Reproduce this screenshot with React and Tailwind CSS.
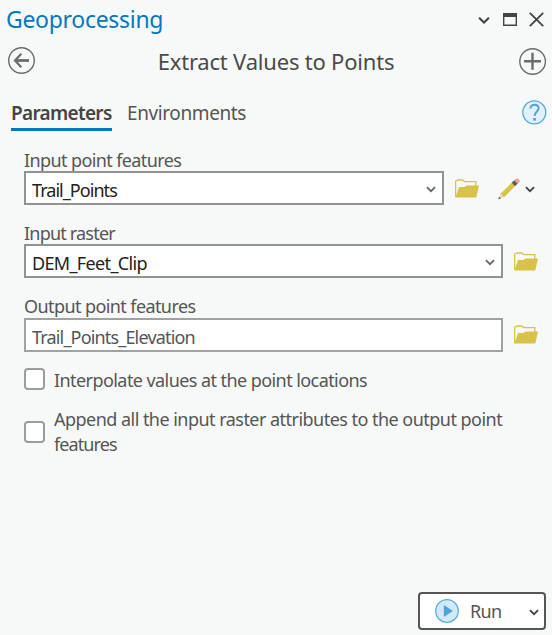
import React from "react";

function Chevron({ className }) {
  return (
    <svg viewBox="0 0 10 7" className={className} fill="none" stroke="currentColor" strokeWidth="1.8">
      <path d="M.9 1.2 5 5.2 9.1 1.2" />
    </svg>
  );
}

function Folder() {
  return (
    <svg viewBox="0 0 24 19" className="h-[19px] w-6 shrink-0">
      <path d="M.6 18V2.2L3.2 1h4.6l1.8 1.6h11.2v5" fill="none" stroke="#d9c24a" strokeWidth="1.3" />
      <path d="M.4 18.4 4 8.1h5.4l2-1.6H24l-2.7 11.9z" fill="#d9c24a" />
    </svg>
  );
}

function Pencil() {
  return (
    <svg viewBox="0 0 22 22" className="h-[22px] w-[22px] shrink-0">
      <path d="M.4 21.2 2.5 15.8 6 19.2z" fill="#f4d6b4" />
      <path d="M.3 21.3 1.2 18.7 3 20.4z" fill="#555" />
      <path d="M2.5 15.8 13.6 4.8 17 8.2 6 19.2z" fill="#d9c24a" />
      <path d="M13.6 4.8 16.4 2.2 19.8 5.5 17 8.2z" fill="#5c5c60" />
      <path d="M16.4 2.2 17.6 1q1.6-1.2 3.2.3t.3 3L19.8 5.5z" fill="#e5a49a" />
    </svg>
  );
}

function Field({ label, labelClass, value, valueClass, select, wide, children }) {
  return (
    <div className="h-[73px] pl-6">
      <div className={"h-[24px] " + (select ? "leading-[26px]" : "leading-[24px]")}>
        <span className={"text-[18px] " + labelClass}>{label}</span>
      </div>
      <div className="flex items-center">
        <div
          className={
            "flex h-[34px] items-center justify-between border-2 bg-white pl-[6px] pr-[6px] " +
            (select ? "border-[#919393] text-[#222] " : "border-[#a0a2a2] ") +
            (wide ? "w-[479px]" : "w-[420px]")
          }
        >
          <span className={"pt-[3px] text-[18px] leading-[24px] " + valueClass}>{value}</span>
          {select && <Chevron className="mt-[2px] h-[7px] w-[10px] text-[#666]" />}
        </div>
        <div className={"flex items-center pl-[11px] " + (select ? "pt-px" : "pb-px")}>{children}</div>
      </div>
    </div>
  );
}

function Box() {
  return <span className="h-[22px] w-[21px] shrink-0 rounded-[4px] border-2 border-[#9b9d9d] bg-white" />;
}

export default function App() {
  return (
    <div className="flex h-[635px] w-[552px] flex-col overflow-hidden whitespace-nowrap bg-[#f7f9f8] font-['Noto_Sans','Open_Sans',sans-serif] text-[#555]">
      <header className="flex h-[38px] items-center justify-between pl-[6px] pr-[8px]">
        <h1 className="text-[23px] leading-[38px] tracking-[-0.3px] text-[#0079c1]">Geoprocessing</h1>
        <div className="flex h-[32px] items-center text-[#444]">
          <Chevron className="mt-[3px] h-[9px] w-[12px]" />
          <svg viewBox="0 0 14 13" className="ml-[13px] h-[13px] w-[14px]">
            <path d="M.7.7h12.6v11.6H.7z" fill="none" stroke="currentColor" strokeWidth="1.4" />
            <path d="M0 0h14v4H0z" fill="currentColor" />
          </svg>
          <svg viewBox="0 0 15 15" className="ml-[12px] h-[15px] w-[15px]" stroke="currentColor" strokeWidth="1.8">
            <path d="M.8.8l13.4 13.4M14.2.8.8 14.2" />
          </svg>
        </div>
      </header>

      <div className="flex h-[46px] items-center justify-between pl-[8px] pr-[5px]">
        <svg viewBox="0 0 28 28" className="h-7 w-7" fill="none" stroke="#6b6b6b">
          <circle cx="13.5" cy="13.5" r="12.8" strokeWidth="1.4" />
          <path d="M21 13.5H7.5" strokeWidth="2.8" />
          <path d="M13.3 6.7 7 13.5l6.3 6.8" strokeWidth="2.2" />
        </svg>
        <h2 className="-mt-px pr-[3px] text-[22px] leading-[30px] tracking-[-0.2px] text-[#4a4a4a]">Extract Values to Points</h2>
        <svg viewBox="0 0 28 28" className="h-7 w-7" fill="none" stroke="#6b6b6b">
          <circle cx="13.6" cy="14.5" r="12.8" strokeWidth="1.4" />
          <path d="M5 14.3h17M13.5 5.8v17" strokeWidth="2.4" />
        </svg>
      </div>

      <nav className="flex h-[64px] items-start pl-[11px] pr-[5px] pt-[15px]">
        <div className="h-[32px] w-[101px] border-b-[3px] border-[#0079c1] font-semibold text-[#444]">
          <span className="text-[19px] leading-[29px] tracking-[-0.7px]">Parameters</span>
        </div>
        <span className="ml-[15px] text-[19px] leading-[29px] tracking-[-0.4px]">Environments</span>
        <svg viewBox="0 0 25 25" className="ml-auto mt-px h-[25px] w-[25px]">
          <circle cx="12.3" cy="12.3" r="11.5" fill="#e2f1fc" stroke="#5aa9dd" strokeWidth="1.3" />
          <path d="M8.4 8.5c.3-2.6 1.9-3.7 4.1-3.7 2.4 0 4.1 1.4 4.1 3.5 0 3.3-4.1 3.6-4.1 7.7" fill="none" stroke="#4fa3db" strokeWidth="2" />
          <path d="M11.2 18h2.7v2.6h-2.7z" fill="#4fa3db" />
        </svg>
      </nav>

      <main className="-mt-px flex flex-col">
        <Field label="Input point features" labelClass="tracking-[-0.61px]" value="Trail_Points" valueClass="tracking-[-0.95px]" select>
          <Folder />
          <span className="w-[19px]" />
          <Pencil />
          <Chevron className="ml-[5px] mt-px h-[7px] w-[10px] text-[#444]" />
        </Field>
        <Field label="Input raster" labelClass="tracking-[-0.8px]" value="DEM_Feet_Clip" valueClass="tracking-[-0.65px]" select wide>
          <Folder />
        </Field>
        <div className="pt-px">
          <Field label="Output point features" labelClass="tracking-[-0.59px]" value="Trail_Points_Elevation" valueClass="tracking-[-0.83px]" wide>
            <Folder />
          </Field>
        </div>
        <label className="mt-px flex h-[22px] items-center gap-[9px] pl-6">
          <Box />
          <span className="pt-[2px] text-[18px] leading-[25px] tracking-[-0.57px]">Interpolate values at the point locations</span>
        </label>
        <label className="mt-[17px] flex items-center gap-[9px] pl-6">
          <Box />
          <span className="text-[18px] leading-[25px]">
            <span className="block tracking-[-0.53px]">Append all the input raster attributes to the output point</span>
            <span className="block tracking-[-0.9px]">features</span>
          </span>
        </label>
      </main>

      <footer className="mb-[5px] mr-[6px] mt-auto flex justify-end">
        <button className="flex h-[38px] w-[128px] items-center rounded-[4px] border-2 border-[#555] bg-white pl-[15px] pr-[5px]">
          <svg viewBox="0 0 24 24" className="h-6 w-6">
            <circle cx="12" cy="12" r="11.3" fill="#d2e9f8" stroke="#5aaede" strokeWidth="1.3" />
            <path d="M8.8 5.9 18 12l-9.2 6.1z" fill="#4fa3db" />
          </svg>
          <span className="ml-[11px] text-[18px] leading-[24px] tracking-[-0.7px]">Run</span>
          <Chevron className="ml-auto mt-[2px] h-[7px] w-[10px] text-[#444]" />
        </button>
      </footer>
    </div>
  );
}
